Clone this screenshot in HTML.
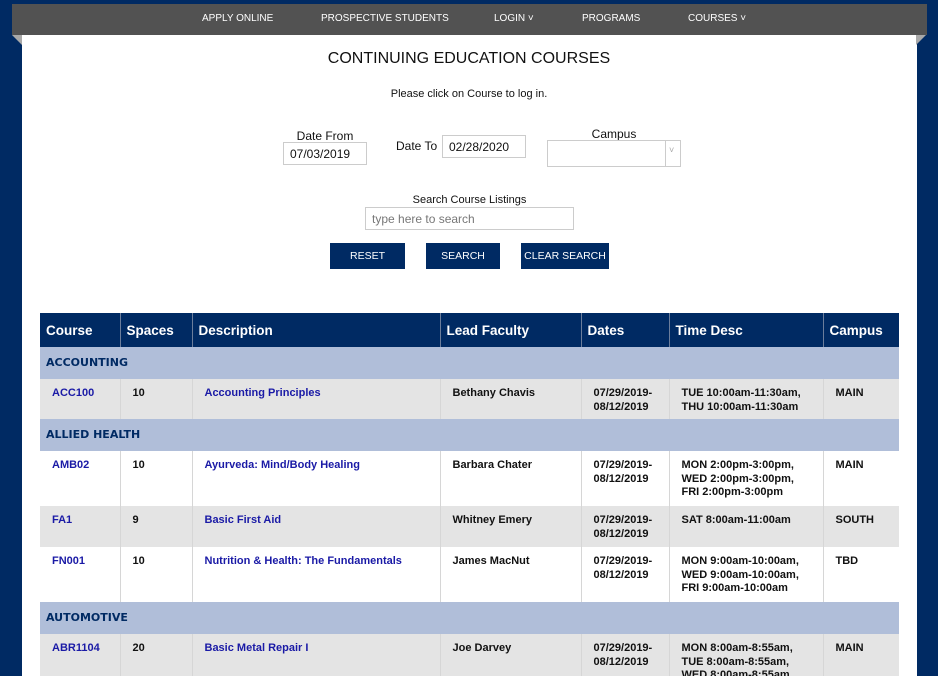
<!DOCTYPE html>
<html style="height:676px;overflow:hidden"><head><style>
*{margin:0;padding:0;box-sizing:border-box}
body{width:938px;height:676px;overflow:hidden;background:#002a63;font-family:"Liberation Sans",Arial,sans-serif;position:relative}
.nav{position:absolute;left:12px;top:4px;width:915px;height:31px;background:#525252}
.nav span{position:absolute;top:9px;color:#fff;font-size:10px}
.page{position:absolute;left:22px;top:35px;width:895px;height:641px;background:#fff}
.tri{position:absolute;top:35px;width:0;height:0}
.abs{position:absolute}
.inp{position:absolute;border:1px solid #ccc;background:#fff;font-size:12px;color:#111;padding:4px 6px}
.btn{position:absolute;top:243px;height:26px;background:#002a63;color:#fff;font-size:10.5px;text-align:center;line-height:26px}
table{position:absolute;left:40px;top:313px;width:859px;border-collapse:collapse;font-size:11px;font-weight:bold}
th{background:#002a63;color:#fff;font-size:13.5px;text-align:left;height:34px;padding:0 6px;border-left:1px solid #6b7d9b}
th:first-child{border-left:none}
td{vertical-align:top;padding:8px 12px 0;line-height:13.5px;border-left:1px solid #d6d6d6;color:#111}
td:first-child{border-left:none}
tr.cat td{background:#b0bed9;color:#002a63;font-size:11px;font-family:"DejaVu Sans",sans-serif;font-weight:bold;height:32px;padding:0 6px;vertical-align:middle}
tr.g td{background:#e4e4e4}
a{color:#1a1aa6;text-decoration:none}
</style></head><body>
<div class="nav">
<span style="left:190px">APPLY ONLINE</span>
<span style="left:309px">PROSPECTIVE STUDENTS</span>
<span style="left:482px">LOGIN ˅</span>
<span style="left:570px">PROGRAMS</span>
<span style="left:676px">COURSES ˅</span>
</div>
<div class="page"></div>
<div class="tri" style="left:12px;border-top:10px solid #a9a9a9;border-left:10px solid transparent"></div>
<div class="tri" style="left:916px;border-top:10px solid #a9a9a9;border-right:10px solid transparent"></div>

<div class="abs" style="left:0;width:938px;top:50px;text-align:center;font-size:16px;color:#111">CONTINUING EDUCATION COURSES</div>
<div class="abs" style="left:0;width:938px;top:88px;text-align:center;font-size:11px;color:#111">Please click on Course to log in.</div>

<div class="abs" style="left:283px;width:84px;top:129px;text-align:center;font-size:12px;color:#111">Date From</div>
<div class="inp" style="left:283px;top:142px;width:84px;height:23px">07/03/2019</div>
<div class="abs" style="left:396px;top:139px;font-size:12px;color:#111">Date To</div>
<div class="inp" style="left:442px;top:135px;width:84px;height:23px">02/28/2020</div>
<div class="abs" style="left:547px;width:134px;top:127px;text-align:center;font-size:12px;color:#111">Campus</div>
<div class="inp" style="left:547px;top:140px;width:134px;height:27px"></div>
<div class="abs" style="left:665px;top:141px;width:1px;height:25px;background:#ccc"></div>
<div class="abs" style="left:669px;top:145px;font-size:9px;color:#aaa">˅</div>

<div class="abs" style="left:365px;width:209px;top:194px;text-align:center;font-size:11px;color:#111">Search Course Listings</div>
<div class="inp" style="left:365px;top:207px;width:209px;height:23px;color:#777">type here to search</div>

<div class="btn" style="left:330px;width:75px">RESET</div>
<div class="btn" style="left:426px;width:74px">SEARCH</div>
<div class="btn" style="left:521px;width:88px">CLEAR SEARCH</div>

<table>
<colgroup><col style="width:80px"><col style="width:72px"><col style="width:248px"><col style="width:141px"><col style="width:88px"><col style="width:154px"><col style="width:76px"></colgroup>
<tr><th>Course</th><th>Spaces</th><th>Description</th><th>Lead Faculty</th><th>Dates</th><th>Time Desc</th><th>Campus</th></tr>
<tr class="cat"><td colspan="7">ACCOUNTING</td></tr>
<tr class="g" style="height:40px"><td><a>ACC100</a></td><td>10</td><td><a>Accounting Principles</a></td><td>Bethany Chavis</td><td>07/29/2019-<br>08/12/2019</td><td>TUE 10:00am-11:30am,<br>THU 10:00am-11:30am</td><td>MAIN</td></tr>
<tr class="cat"><td colspan="7">ALLIED HEALTH</td></tr>
<tr style="height:55px"><td><a>AMB02</a></td><td>10</td><td><a>Ayurveda: Mind/Body Healing</a></td><td>Barbara Chater</td><td>07/29/2019-<br>08/12/2019</td><td>MON 2:00pm-3:00pm,<br>WED 2:00pm-3:00pm,<br>FRI 2:00pm-3:00pm</td><td>MAIN</td></tr>
<tr class="g" style="height:41px"><td><a>FA1</a></td><td>9</td><td><a>Basic First Aid</a></td><td>Whitney Emery</td><td>07/29/2019-<br>08/12/2019</td><td>SAT 8:00am-11:00am</td><td>SOUTH</td></tr>
<tr style="height:55px"><td><a>FN001</a></td><td>10</td><td><a>Nutrition &amp; Health: The Fundamentals</a></td><td>James MacNut</td><td>07/29/2019-<br>08/12/2019</td><td>MON 9:00am-10:00am,<br>WED 9:00am-10:00am,<br>FRI 9:00am-10:00am</td><td>TBD</td></tr>
<tr class="cat"><td colspan="7">AUTOMOTIVE</td></tr>
<tr class="g" style="height:55px"><td><a>ABR1104</a></td><td>20</td><td><a>Basic Metal Repair I</a></td><td>Joe Darvey</td><td>07/29/2019-<br>08/12/2019</td><td>MON 8:00am-8:55am,<br>TUE 8:00am-8:55am,<br>WED 8:00am-8:55am</td><td>MAIN</td></tr>
</table>
</body></html>
